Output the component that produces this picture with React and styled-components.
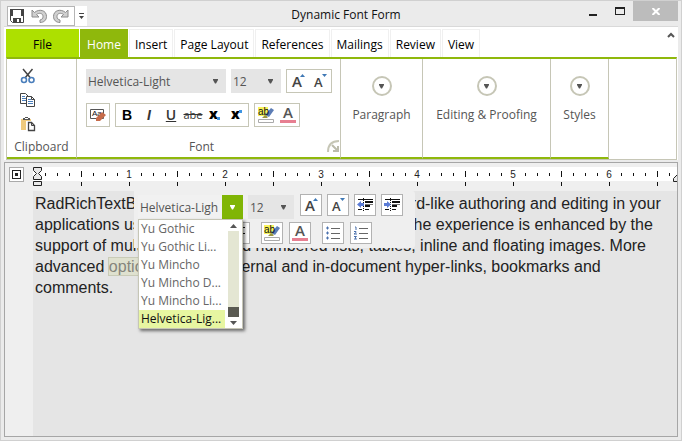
import React from "react";
import styled, { createGlobalStyle, css } from "styled-components";

const ui = '"Open Sans", "Noto Sans", sans-serif';

const GlobalStyle = createGlobalStyle`
  * { box-sizing: border-box; }
  html, body, #root { height: 100%; }
  body { margin: 0; font-family: ${ui}; font-size: 12px; color: #555; overflow: hidden; }
  button, input, select { font: inherit; color: inherit; margin: 0; padding: 0; border: 0; border-radius: 0; background: none; }
  svg { display: block; }
`;

const Window = styled.div`
  height: 100%;
  display: flex;
  flex-direction: column;
  background: #ebebeb;
  border: 1px solid #d0d0d0;
  padding: 0 3px 3px;
`;

const TitleBar = styled.header`
  display: grid;
  grid-template-columns: 1fr auto 1fr;
  grid-template-rows: 25px;
  height: 25px;
`;

const QuickAccess = styled.div`
  display: flex;
  justify-self: start;
  align-self: end;
  margin-left: 3px;
  height: 20px;
  background: #fff;
`;

const QuickButtons = styled.div`
  display: flex;
  align-items: center;
  gap: 6px;
  width: 68px;
  padding-left: 1px;
  border: 1px solid #b5b5b5;
`;

const PlainButton = styled.button`
  display: grid;
  place-items: center;
  min-width: 12px;
`;

const Title = styled.h1`
  margin: 0;
  padding: 2px 0 0 10px;
  font-size: 12px;
  line-height: 23px;
  font-weight: 400;
  color: #111;
`;

const WindowButtons = styled.div`
  display: flex;
  justify-self: end;
  height: 20px;
`;

const WindowButton = styled.button`
  width: ${(p) => (p.$close ? 45 : 27)}px;
  display: grid;
  place-items: center;
  background: ${(p) => (p.$close ? "#bcbcbc" : "none")};
`;

const Ribbon = styled.section`
  background: #fff;
  border-top: 1px solid #d9d9d9;
  padding: 2px 1px 0 2px;
`;

const Tabs = styled.nav`
  display: flex;
  height: 28px;
  gap: 1px;
`;

const Tab = styled.button`
  padding: 2px 5px 0;
  color: #000;
  border: 1px solid #f0f0f0;
  border-bottom: 0;
  ${(p) => p.$kind === "file" && css`width: 73px; background: #ade000; border: 0;`}
  ${(p) => p.$kind === "home" && css`color: #fff; background: #8fb80c; border: 0; width: 48px;`}
`;

const CollapseButton = styled(PlainButton)`
  margin-left: auto;
  height: 12px;
`;

const Groups = styled.div`
  display: flex;
  height: 103px;
  border: 1px solid #c6c6b6;
  border-top: 2px solid #8fb80c;
`;

const Group = styled.section`
  width: ${(p) => p.$width}px;
  display: flex;
  flex-direction: column;
  border-right: 1px solid #c6c6b6;
  border-bottom: 2px solid #8fb80c;
  ${(p) => p.$collapsed && css`align-items: center; gap: 10px; padding-top: 17px;`}
`;

const GroupFooter = styled.div`
  display: grid;
  grid-template-columns: 1fr 14px;
  align-items: center;
  margin-top: auto;
  height: 22px;
  text-align: center;
`;

const FooterLabel = styled.span`
  grid-column: ${(p) => (p.$wide ? "1 / 3" : "1")};
`;

const ClipboardStack = styled.div`
  display: flex;
  flex-direction: column;
  align-items: flex-start;
  gap: 8px;
  padding: 9px 0 0 13px;
`;

const FontRows = styled.div`
  display: flex;
  flex-direction: column;
  gap: 10px;
  padding: 10px 0 0 9px;
`;

const Row = styled.div`
  display: flex;
  gap: 5px;
`;

const ButtonGroup = styled.div`
  display: flex;
  height: 24px;
  border: 1px solid #c6c6b6;
  background: #fff;
`;

const ToolButton = styled.button`
  width: 22px;
  display: grid;
  place-items: center;
`;

const CircleButton = styled.button`
  width: 20px;
  height: 20px;
  border: 2px solid #c6c6b6;
  border-radius: 50%;
  display: grid;
  place-items: center;
`;

const SelectBox = styled.label`
  width: ${(p) => p.$width}px;
  height: 24px;
  display: grid;
  align-items: center;
  background: #e5e5e5;
  > * { grid-area: 1 / 1; }
  > svg { justify-self: end; margin-right: 7px; pointer-events: none; }
`;

const Select = styled.select`
  appearance: none;
  width: 100%;
  height: 24px;
  padding-left: 2px;
`;

const Editor = styled.main`
  flex: 1;
  min-height: 0;
  margin: 2px 0 0;
  border: 1px solid #a6a6a6;
  background: #efefef;
  display: grid;
  grid-template-columns: 28px 1fr;
  grid-template-rows: 28px 1fr;
`;

const TabSelector = styled.button`
  width: 15px;
  height: 15px;
  margin: 4px 0 0 4px;
  border: 1px solid #aaa;
  background: #fff;
  display: grid;
  place-items: center;
`;

const RulerBox = styled.div`
  overflow: hidden;
  padding-top: 4px;
`;

const Document = styled.article`
  grid-column: 2;
  position: relative;
  min-height: 0;
  background: #e5e5e5;
  padding: 2px 0 0 2px;
`;

const Paragraph = styled.p`
  margin: 0;
  font-family: "Liberation Sans", Arial, sans-serif;
  font-size: 16px;
  line-height: 21px;
  color: #222;
  white-space: nowrap;
`;

const Line = styled.span`
  display: block;
`;

const Mark = styled.mark`
  color: #85857c;
  background: #dfe1cf;
  box-shadow: 0 0 0 1px #c9cbb7;
`;

const MiniToolbar = styled.div`
  position: absolute;
  left: 101px;
  top: 0;
  width: 281px;
  height: 57px;
  padding: 3px 0 0 4px;
  background: #efefef;
  border-radius: 0 3px 3px 0;
`;

const MiniRow = styled.div`
  display: flex;
  gap: 5px;
  height: 25px;
  align-items: flex-end;
`;

const MiniRowLower = styled.div`
  display: flex;
  gap: 11px;
  margin-top: 3px;
  padding-left: 6px;
`;

const MiniButtons = styled.div`
  display: flex;
  align-self: flex-start;
  gap: ${(p) => (p.$wide ? 6 : 5)}px;
  margin-left: ${(p) => (p.$wide ? 0 : 1)}px;
`;

const MiniButton = styled.button`
  width: 22px;
  height: 22px;
  background: #fff;
  border: 1px solid #b2b2b2;
  display: grid;
  place-items: center;
`;

const Combo = styled.div`
  display: flex;
  width: 105px;
  height: 24px;
`;

const ComboInput = styled.input`
  min-width: 0;
  flex: 1;
  padding-left: 2px;
  background: #f1f1f1;
`;

const ComboButton = styled.button`
  width: 21px;
  background: #80b505;
  display: grid;
  place-items: center;
`;

const Popup = styled.div`
  position: absolute;
  left: 4px;
  top: 28px;
  width: 105px;
  height: 110px;
  display: flex;
  background: #fff;
  border: 1px solid #c6c6b6;
  box-shadow: 2px 2px 3px #0008;
`;

const Options = styled.ul`
  margin: 0;
  padding: 0;
  flex: 1;
  min-width: 0;
  list-style: none;
`;

const Option = styled.li`
  height: 18px;
  line-height: 18px;
  padding-left: 2px;
  white-space: nowrap;
  color: ${(p) => (p.$selected ? "#111" : "#666")};
  background: ${(p) => (p.$selected ? "#e7f6a1" : "none")};
`;

const Scrollbar = styled.div`
  width: 17px;
  padding: 0 3px;
  display: flex;
  flex-direction: column;
`;

const ScrollButton = styled.button`
  height: 11px;
  display: grid;
  place-items: center;
`;

const Track = styled.div`
  flex: 1;
  display: flex;
  align-items: flex-end;
  background: #e4e6d3;
`;

const Thumb = styled.div`
  width: 100%;
  height: 10px;
  background: #5a5a52;
`;

const IconSvg = styled.svg`
  overflow: visible;
`;

const Glyph = styled.span`
  font-family: ${(p) => (p.$ui ? ui : '"Liberation Sans", Arial, sans-serif')};
  font-size: ${(p) => p.$size || 14}px;
  line-height: 16px;
  font-weight: ${(p) => p.$weight || 700};
  font-style: ${(p) => (p.$italic ? "italic" : "normal")};
  text-decoration: ${(p) => p.$line || "none"};
  color: ${(p) => p.$color || "#333"};
`;

const Down = ({ color = "#555" }) => (
  <svg width="7" height="5" viewBox="0 0 7 5" aria-hidden="true"><path d="M1 0h5v1L4 4.5H3L1 1z" fill={color} /></svg>
);

const Icon = ({ children, w = 16, h = 16 }) => (
  <IconSvg width={w} height={h} viewBox={`0 0 ${w} ${h}`} fill="none" aria-hidden="true">{children}</IconSvg>
);

const Save = () => (
  <Icon>
    <path d="M1.500 1.500h13v13h-11l-2-2z" stroke="#444" fill="#fff" />
    <path d="M1 1h3v7h8V1h3v7H1z" fill="#444" />
    <path d="M4 10h8v5H4z" fill="#444" /><path d="M8 11h2v3H8z" fill="#fff" />
  </Icon>
);
const Undo = ({ flip }) => (
  <Icon>
    <g transform={flip ? "matrix(-1 0 0 1 16 0)" : undefined}>
      <path d="M1 2v7h7L5.500 6.500C8 4.500 12 5 12 8.500c0 2-1 3-3 3.500v2.500c4 0 6.500-2.500 6.500-6C15.500 2 8 .5 3.500 4.500z" fill="#d0d0d0" stroke="#8c8c8c" />
    </g>
  </Icon>
);
const Cut = () => (
  <Icon>
    <path d="M3 1l7.500 9M12.500 1L5 10" stroke="#444" strokeWidth="1.5" />
    <circle cx="4" cy="12" r="2.500" stroke="#4a7ebb" strokeWidth="1.6" /><circle cx="11.500" cy="12" r="2.500" stroke="#4a7ebb" strokeWidth="1.6" />
  </Icon>
);
const Copy = () => (
  <Icon>
    <path d="M.5 1.500h5l3 3v7h-8z" fill="#fff" stroke="#444" />
    <path d="M2 4.500h3M2 6.500h4M2 8.500h4" stroke="#4a7ebb" />
    <path d="M6.500 4.500h5l3 3v7h-8z" fill="#fff" stroke="#444" /><path d="M11.500 4.500v3h3" stroke="#444" />
    <path d="M8 7.500h3M8 9.500h5M8 11.500h5" stroke="#4a7ebb" />
  </Icon>
);
const Paste = () => (
  <Icon>
    <path d="M1 3h10v11H1z" fill="#efca7d" /><path d="M3 2h2V1h3v1h2v2H3z" fill="#555" /><path d="M5 2h3v1H5z" fill="#fff" />
    <path d="M7 6h5l3 3v6H7z" fill="#fff" stroke="#fff" strokeWidth="2" />
    <path d="M8.500 6.500h3l3 3v5h-6z" fill="#fff" stroke="#444" strokeWidth="1.3" /><path d="M11.500 6.500v3h3" stroke="#444" />
  </Icon>
);
const svgFont = { fontFamily: "Liberation Sans, Arial, sans-serif" };
const ClearFormat = () => (
  <Icon w={18} h={14}>
    <path d="M1.500 1.500h13v9h-13z" stroke="#555" fill="#fff" />
    <text x="3" y="8" fontSize="8" fill="#111" {...svgFont}>Aa</text>
    <path d="M13 4l4 3-6 6H7v-3z" fill="#c66b4a" />
  </Icon>
);
const Script = ({ sup }) => (
  <Icon>
    <text x="2" y="12" fontSize="14" fontWeight="800" fontFamily={ui} fill="#000">x</text>
    <path d={sup ? "M10 3h3v3h-3z" : "M10 10h3v3h-3z"} fill="#3d94e2" />
  </Icon>
);
const SizeIcon = ({ shrink }) => (
  <Icon>
    <text x="2" y="14" fontFamily={ui} fontWeight="600" fontSize={shrink ? 13 : 15} fill="#444">A</text>
    <path d={shrink ? "M10 1h5l-2.500 3z" : "M10 4h5l-2.500-3z"} fill="#3f78b5" />
  </Icon>
);
const Highlight = () => (
  <Icon w={18} h={18}>
    <path d="M1 1h10v9H1z" fill="#f8f35b" />
    <path d="M14 2l3 2-5 7-4-2z" fill="#5c7db5" /><path d="M8 9l3 2-1 1H5z" fill="#99963e" />
    <text x="1" y="9" fontSize="10" fill="#111" {...svgFont}>ab</text>
    <path d="M1.500 13.500h15v3h-15z" stroke="#aaa" fill="#fff" />
  </Icon>
);
const FontColor = () => (
  <Icon w={18} h={18}>
    <text x="4" y="12" fontSize="15" fontFamily={ui} fontWeight="600" fill="#555">A</text>
    <path d="M1 14h16v3H1z" fill="#e77f91" />
  </Icon>
);
const Indent = ({ right }) => (
  <Icon w={18} h={16}>
    <path d="M2 2.500h15M9 12.500h4M2 12.500h4" stroke="#111" />
    <path d="M9 5h8M9 9h5" stroke="#111" strokeWidth="2" />
    <path d="M9 7.500h8" stroke="#777" />
    <path d="M7.500 1v14" stroke="#111" strokeDasharray="1 1" />
    <path d={right ? "M1 6h3V4l4 3.500L4 11V9H1z" : "M8 6H5V4L1 7.500 5 11V9h3z"} fill="#5a7bd6" />
  </Icon>
);
const ListIcon = ({ numbered }) => (
  <Icon w={14} h={14}>
    {numbered ? (
      <path d="M1 1h1v3M0 5.500h2v1L0 8h3M0 10.500h2.500L1 12l1.500 1H0" stroke="#4a70ad" />
    ) : (
      <path d="M0 2h3M1.500.5v3M0 7h3M1.500 5.500v3M0 12h3M1.500 10.500v3" stroke="#4a70ad" />
    )}
    <path d="M5 2.500h9M5 7.500h9M5 12.500h9" stroke="#666" />
  </Icon>
);
const Align = () => (
  <Icon><path d="M2 2.500h12M5 5.500h6M2 8.500h12M5 11.500h6" stroke="#111" /></Icon>
);
const Launcher = () => (
  <Icon w={12} h={12}>
    <path d="M1 12C1 5 5 1 12 1" stroke="#c6c6b6" strokeWidth="2" /><path d="M5 5l6 6M11 6v5H6" stroke="#bcbcac" strokeWidth="2" />
  </Icon>
);

const Ruler = () => (
  <svg width="1000" height="24" aria-label="Ruler" role="img">
    <path d="M0 0h1000v14H0z" fill="#fff" />
    {Array.from({ length: 80 }, (_, i) => i + 1).map((i) => {
      const x = i * 12;
      return (
        <g key={i} shapeRendering="crispEdges">
          {i % 8 !== 0 && <path d={i % 4 === 0 ? `M${x} 4h1v6h-1z` : `M${x} 6h1v3h-1z`} fill="#111" />}
          {i % 8 === 0 && <text x={x} y="11" fontSize="10" textAnchor="middle" fill="#222" {...svgFont}>{i / 8}</text>}
          {i % 4 === 0 && <path d={`M${x} 15h1v4h-1z`} fill="#111" />}
        </g>
      );
    })}
    <path d="M.5.500h8v3l-3 3 3 3v3h-8v-3l3-3-3-3zM.5 14.500h8v4h-8z" stroke="#222" fill="#e8e8e8" />
    <path d="M640.500 14.500v-3l4-4 4 4v3z" stroke="#222" fill="#e8e8e8" />
  </svg>
);

const tabs = ["Insert", "Page Layout", "References", "Mailings", "Review", "View"];
const fonts = ["Yu Gothic", "Yu Gothic Li...", "Yu Mincho", "Yu Mincho D...", "Yu Mincho Li...", "Helvetica-Lig..."];
const collapsed = [["Paragraph", 82], ["Editing & Proofing", 128], ["Styles", 58]];

function FontSize({ width }) {
  return (
    <SelectBox $width={width}>
      <Select aria-label="Font size"><option>12</option></Select>
      <Down />
    </SelectBox>
  );
}

function FontGroup() {
  return (
    <Group $width={264}>
      <FontRows>
        <Row>
          <SelectBox $width={140}>
            <Select aria-label="Font family"><option>Helvetica-Light</option></Select>
            <Down />
          </SelectBox>
          <FontSize width={50} />
          <ButtonGroup>
            <ToolButton aria-label="Grow font"><SizeIcon /></ToolButton>
            <ToolButton aria-label="Shrink font"><SizeIcon shrink /></ToolButton>
          </ButtonGroup>
        </Row>
        <Row>
          <ButtonGroup><ToolButton aria-label="Clear formatting"><ClearFormat /></ToolButton></ButtonGroup>
          <ButtonGroup>
            <ToolButton><Glyph $color="#000">B</Glyph></ToolButton>
            <ToolButton><Glyph $italic>I</Glyph></ToolButton>
            <ToolButton><Glyph $ui $weight={600} $line="underline">U</Glyph></ToolButton>
            <ToolButton><Glyph $ui $weight={400} $size={11} $line="line-through">abe</Glyph></ToolButton>
            <ToolButton aria-label="Subscript"><Script /></ToolButton>
            <ToolButton aria-label="Superscript"><Script sup /></ToolButton>
          </ButtonGroup>
          <ButtonGroup>
            <ToolButton aria-label="Highlight"><Highlight /></ToolButton>
            <ToolButton aria-label="Font color"><FontColor /></ToolButton>
          </ButtonGroup>
        </Row>
      </FontRows>
      <GroupFooter>
        <FooterLabel>Font</FooterLabel>
        <PlainButton aria-label="Font dialog"><Launcher /></PlainButton>
      </GroupFooter>
    </Group>
  );
}

function FloatingTools() {
  return (
    <MiniToolbar role="toolbar" aria-label="Formatting">
      <MiniRow>
        <Combo>
          <ComboInput aria-label="Font" defaultValue="Helvetica-Ligh" />
          <ComboButton aria-label="Show fonts"><Down color="#fff" /></ComboButton>
        </Combo>
        <FontSize width={46} />
        <MiniButtons>
          <MiniButton aria-label="Grow font"><SizeIcon /></MiniButton>
          <MiniButton aria-label="Shrink font"><SizeIcon shrink /></MiniButton>
          <MiniButton aria-label="Decrease indent"><Indent /></MiniButton>
          <MiniButton aria-label="Increase indent"><Indent right /></MiniButton>
        </MiniButtons>
      </MiniRow>
      <MiniRowLower>
        <MiniButtons $wide>
          <MiniButton aria-label="Justify"><Align /></MiniButton>
          <MiniButton aria-label="Align left"><Align /></MiniButton>
          <MiniButton aria-label="Align right"><Align /></MiniButton>
          <MiniButton aria-label="Center"><Align /></MiniButton>
        </MiniButtons>
        <MiniButtons $wide>
          <MiniButton aria-label="Highlight"><Highlight /></MiniButton>
          <MiniButton aria-label="Font color"><FontColor /></MiniButton>
        </MiniButtons>
        <MiniButtons $wide>
          <MiniButton aria-label="Bullets"><ListIcon /></MiniButton>
          <MiniButton aria-label="Numbering"><ListIcon numbered /></MiniButton>
        </MiniButtons>
      </MiniRowLower>
      <Popup>
        <Options role="listbox" aria-label="Fonts">
          {fonts.map((f, i) => (
            <Option key={f} role="option" aria-selected={i === 5} $selected={i === 5}>{f}</Option>
          ))}
        </Options>
        <Scrollbar>
          <ScrollButton aria-label="Scroll up"><svg width="7" height="4"><path d="M0 4h7L3.500 0z" fill="#555" /></svg></ScrollButton>
          <Track><Thumb /></Track>
          <ScrollButton aria-label="Scroll down"><svg width="7" height="4"><path d="M0 0h7L3.500 4z" fill="#555" /></svg></ScrollButton>
        </Scrollbar>
      </Popup>
    </MiniToolbar>
  );
}

export default function App() {
  return (
    <>
      <GlobalStyle />
      <Window>
        <TitleBar>
          <QuickAccess>
            <QuickButtons>
              <PlainButton aria-label="Save"><Save /></PlainButton>
              <PlainButton aria-label="Undo"><Undo /></PlainButton>
              <PlainButton aria-label="Redo"><Undo flip /></PlainButton>
            </QuickButtons>
            <PlainButton aria-label="Customize toolbar">
              <svg width="5" height="7"><path d="M0 0h5v1H0zM0 3h5L2.500 6z" fill="#444" /></svg>
            </PlainButton>
          </QuickAccess>
          <Title>Dynamic Font Form</Title>
          <WindowButtons>
            <WindowButton aria-label="Minimize"><svg width="8" height="12"><path d="M0 9h8v2H0z" fill="#222" /></svg></WindowButton>
            <WindowButton aria-label="Maximize"><svg width="10" height="8"><path d="M0 0h10v8H0zM1 2v5h8V2z" fillRule="evenodd" fill="#222" /></svg></WindowButton>
            <WindowButton $close aria-label="Close"><svg width="8" height="7"><path d="M.5 0l7 7M7.500 0l-7 7" stroke="#fff" strokeWidth="2" /></svg></WindowButton>
          </WindowButtons>
        </TitleBar>
        <Ribbon>
          <Tabs>
            <Tab $kind="file">File</Tab>
            <Tab $kind="home">Home</Tab>
            {tabs.map((t) => <Tab key={t}>{t}</Tab>)}
            <CollapseButton aria-label="Collapse ribbon">
              <svg width="8" height="6"><path d="M1 5l3-3 3 3" stroke="#555" strokeWidth="2" fill="none" /></svg>
            </CollapseButton>
          </Tabs>
          <Groups>
            <Group $width={70}>
              <ClipboardStack>
                <PlainButton aria-label="Cut"><Cut /></PlainButton>
                <PlainButton aria-label="Copy"><Copy /></PlainButton>
                <PlainButton aria-label="Paste"><Paste /></PlainButton>
              </ClipboardStack>
              <GroupFooter><FooterLabel $wide>Clipboard</FooterLabel></GroupFooter>
            </Group>
            <FontGroup />
            {collapsed.map(([name, width]) => (
              <Group key={name} $width={width} $collapsed>
                <CircleButton aria-label={`${name} options`}><Down /></CircleButton>
                <span>{name}</span>
              </Group>
            ))}
          </Groups>
        </Ribbon>
        <Editor>
          <TabSelector aria-label="Tab type">
            <svg width="9" height="9"><path d="M0 0h9v9H0zM1 1v7h7V1zM3 3h3v3H3z" fillRule="evenodd" fill="#222" /></svg>
          </TabSelector>
          <RulerBox><Ruler /></RulerBox>
          <Document>
            <Paragraph>
              <Line>RadRichTextBox for WinForms allows for the rich Word-like authoring and editing in your</Line>
              <Line>applications using a simple and intuitive modern UI. The experience is enhanced by the</Line>
              <Line>support of multilevel bullet and numbered lists, tables, inline and floating images. More</Line>
              <Line>advanced <Mark>options</Mark> include external and in-document hyper-links, bookmarks and</Line>
              <Line>comments.</Line>
            </Paragraph>
            <FloatingTools />
          </Document>
        </Editor>
      </Window>
    </>
  );
}
